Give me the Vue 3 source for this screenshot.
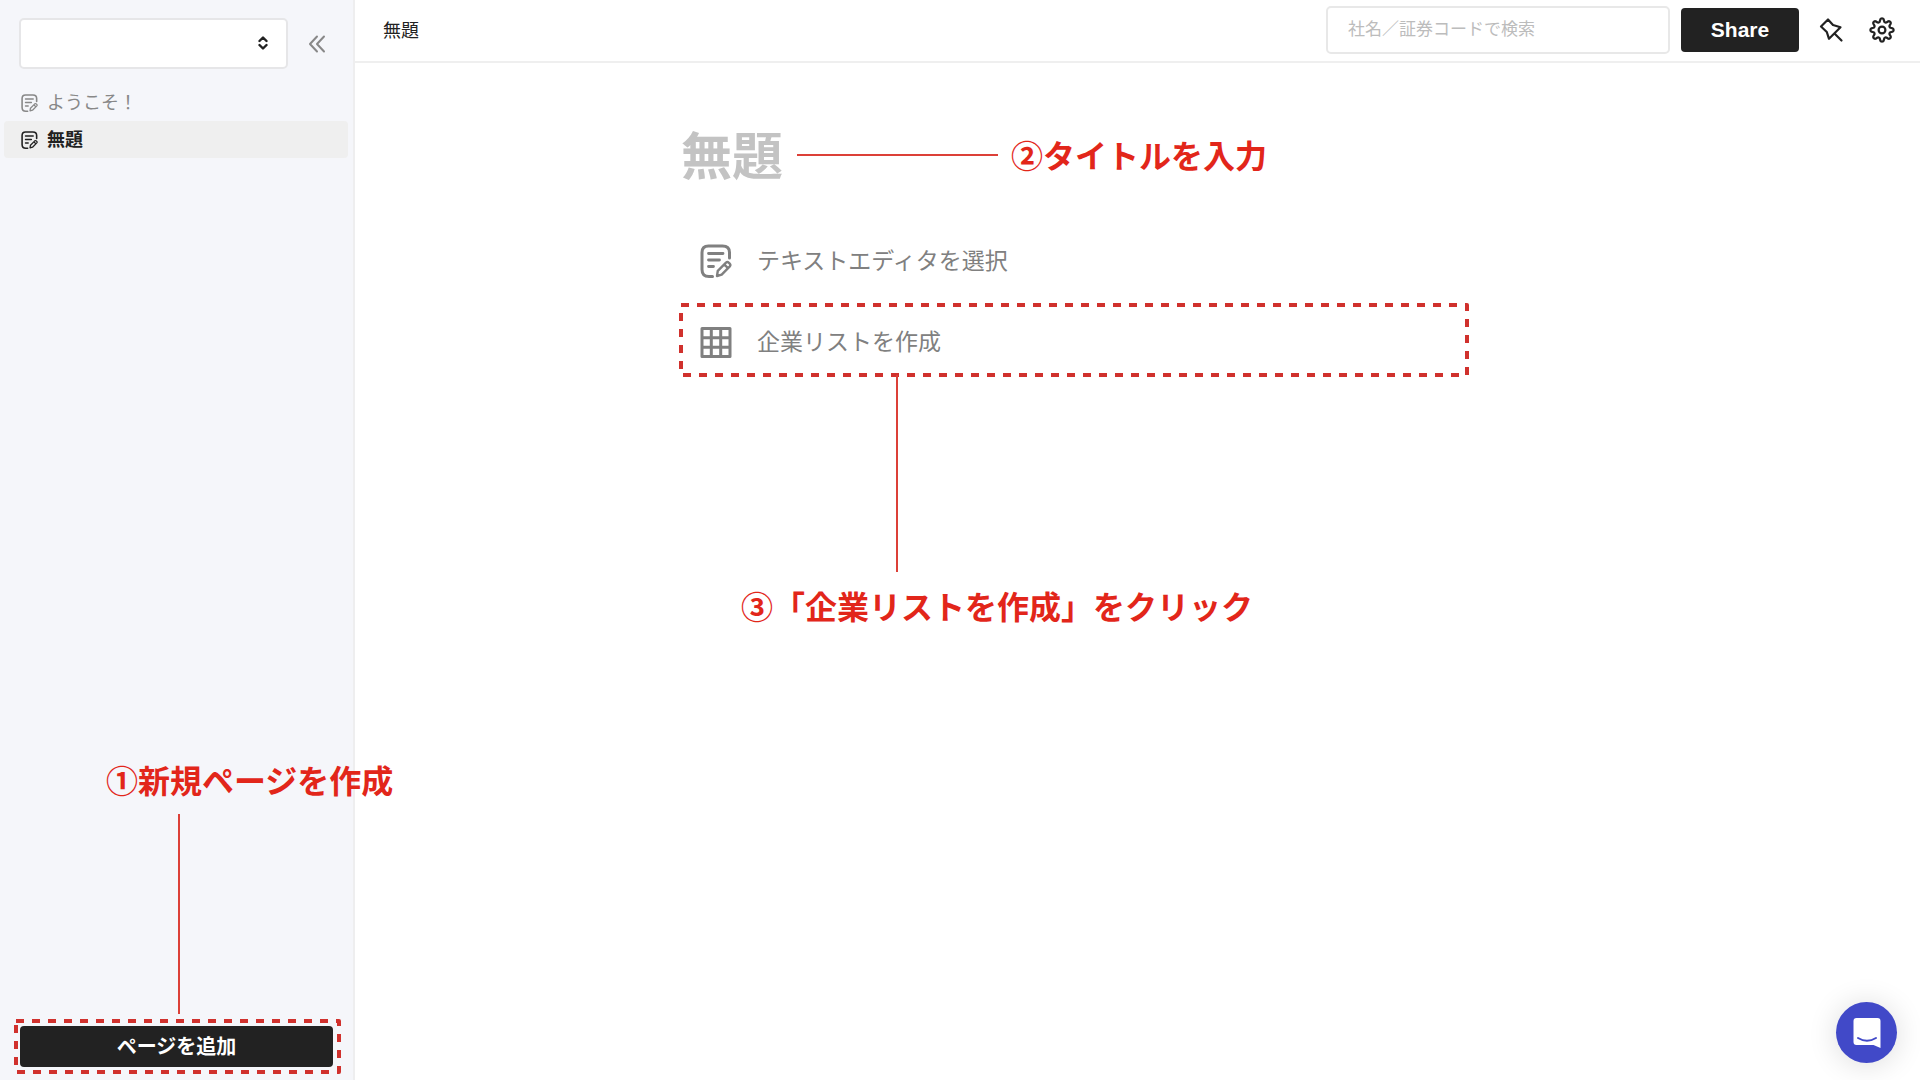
<script setup>
import { ref } from 'vue'

const pages = [
  { id: 1, title: 'ようこそ！', current: false },
  { id: 2, title: '無題', current: true },
]
const title = ref('')
const query = ref('')

const gearPoints = Array.from({ length: 120 }, (_, i) => {
  const a = (i / 120) * Math.PI * 2
  const r = 9.9 + 1.8 * Math.tanh(1.6 * Math.cos(8 * a))
  return `${(13 + r * Math.cos(a)).toFixed(2)},${(13 + r * Math.sin(a)).toFixed(2)}`
}).join(' ')
</script>

<template>
  <div class="app">
    <svg class="defs" aria-hidden="true">
      <symbol id="note" viewBox="0 0 32 34">
        <g fill="none" stroke="currentColor" stroke-linecap="round" stroke-linejoin="round">
          <path stroke-width="3" d="M29.500 14V8.500Q29.500 2 22.500 2H8.500Q2 2 2 8.500V25.500Q2 32.500 9 32.500H12.500" />
          <path stroke-width="2.800" d="M8.500 9.500H23M8.500 16H19.500M8.500 22.500H13.500" />
          <path stroke-width="2.400" d="M17 32L17.800 26.800L26 18.600Q27.400 17.400 28.900 18.800L29.700 19.600Q31 21 29.800 22.400L21.700 30.600ZM24.300 20.500L28 24.200" />
        </g>
      </symbol>
    </svg>

    <aside class="sidebar">
      <div class="switcher">
        <div class="select-wrap">
          <select aria-label="ワークスペース"><option></option></select>
          <svg class="updown" viewBox="0 0 10 14" aria-hidden="true">
            <path d="M1.500 5L5 1.500L8.500 5M1.500 9L5 12.500L8.500 9" />
          </svg>
        </div>
        <button class="collapse" aria-label="サイドバーを閉じる">
          <svg viewBox="0 0 18 18" aria-hidden="true"><path d="M9 1.500L2 9L9 16.500M16 1.500L9 9L16 16.500" /></svg>
        </button>
      </div>
      <nav class="pages">
        <a v-for="p in pages" :key="p.id" href="#" :class="['page', { current: p.current }]">
          <svg class="page-icon" aria-hidden="true"><use href="#note" /></svg>
          <span>{{ p.title }}</span>
        </a>
      </nav>
      <div class="add-area">
        <div class="callout callout-add">
          <p class="note-text">①新規ページを作成</p>
          <i class="v-line"></i>
        </div>
        <button class="add">ページを追加</button>
        <svg class="dashes" aria-hidden="true"><rect class="dash-rect" /></svg>
      </div>
    </aside>

    <div class="main">
      <header class="topbar">
        <span class="crumb">無題</span>
        <input v-model="query" class="search" type="text" aria-label="検索" placeholder="社名／証券コードで検索" />
        <button class="share">Share</button>
        <button class="icon-btn pin" aria-label="ピン留め">
          <svg viewBox="0 0 26 26" aria-hidden="true">
            <path d="M3 9.500L10 2.500L15 8L22.500 10.200L11 21.800L8.800 15ZM16.500 16.500L23.500 23.500" />
          </svg>
        </button>
        <button class="icon-btn gear" aria-label="設定">
          <svg viewBox="0 0 26 26" aria-hidden="true">
            <polygon :points="gearPoints" />
            <circle cx="13" cy="13" r="3.400" />
          </svg>
        </button>
      </header>

      <main class="editor">
        <div class="title-row">
          <input v-model="title" class="title" type="text" aria-label="タイトル" placeholder="無題" />
          <i class="h-line"></i>
          <p class="note-text">②タイトルを入力</p>
        </div>
        <button class="option">
          <svg class="option-icon" aria-hidden="true"><use href="#note" /></svg>
          <span>テキストエディタを選択</span>
        </button>
        <div class="marked">
          <button class="option">
            <svg class="option-icon" viewBox="0 0 32 34" aria-hidden="true">
              <path class="grid" d="M2 3.500H30V31.500H2ZM2 12.800H30M2 22.200H30M11.300 3.500V31.500M20.700 3.500V31.500" />
            </svg>
            <span>企業リストを作成</span>
          </button>
          <svg class="dashes" aria-hidden="true"><rect class="dash-rect" /></svg>
          <div class="callout callout-list">
            <i class="v-line"></i>
            <p class="note-text">③「企業リストを作成」をクリック</p>
          </div>
        </div>
      </main>
    </div>

    <button class="chat" aria-label="チャットを開く">
      <svg viewBox="0 0 28 32" aria-hidden="true">
        <path fill="#fff" d="M3.500 1H24.500Q27.500 1 27.500 4V31L20.500 28H3.500Q.5 28 .5 25V4Q.5 1 3.500 1Z" />
        <path class="smile" d="M5 21Q14 26.500 23 21" />
      </svg>
    </button>
  </div>
</template>

<style>
body {
  margin: 0;
}
</style>

<style scoped>
.app {
  display: flex;
  min-height: 100vh;
  background: #fff;
  color: #222;
  font-family: "Liberation Sans", "Noto Sans CJK JP", sans-serif;
  font-size: 18px;
}
.app * {
  box-sizing: border-box;
}
button,
input,
select {
  font: inherit;
  color: inherit;
  border: 0;
  padding: 0;
  margin: 0;
  background: none;
  outline: none;
}
button {
  cursor: pointer;
}
p {
  margin: 0;
}
svg {
  display: block;
  fill: none;
  stroke-linecap: round;
  stroke-linejoin: round;
}
.defs {
  position: absolute;
  width: 0;
  height: 0;
}

.sidebar {
  display: flex;
  flex-direction: column;
  flex: 0 0 355px;
  background: #f5f6fa;
  border-right: 2px solid #eeeeef;
}
.switcher {
  display: flex;
  align-items: center;
  gap: 20px;
  padding: 18px 20px 15px 19px;
}
.select-wrap {
  position: relative;
  width: 269px;
}
.select-wrap select {
  display: block;
  width: 100%;
  height: 51px;
  appearance: none;
  background: #fff;
  border: 2px solid #e6e6e8;
  border-radius: 5px;
}
.updown {
  position: absolute;
  right: 20px;
  top: 18px;
  width: 10px;
  height: 14px;
  stroke: #222;
  stroke-width: 2.4;
  pointer-events: none;
}
.collapse svg {
  width: 18px;
  height: 18px;
  stroke: #888;
  stroke-width: 2;
}
.page {
  display: flex;
  align-items: center;
  gap: 9px;
  height: 37px;
  margin: 0 5px 0 4px;
  padding-left: 17px;
  border-radius: 4px;
  color: #888;
  text-decoration: none;
}
.page span {
  padding-bottom: 4px;
}
.page.current {
  background: #efefef;
  color: #222;
  font-weight: 700;
}
.page-icon {
  width: 17px;
  height: 18px;
}
.add-area {
  position: relative;
  margin: auto 12px 6px 14px;
  padding: 7px 8px 7px 6px;
}
.add {
  display: block;
  width: 100%;
  height: 41px;
  padding-bottom: 2px;
  border-radius: 4px;
  background: #222;
  color: #fff;
  font-size: 20px;
  font-weight: 700;
}

.dashes {
  position: absolute;
  inset: 0;
  width: 100%;
  height: 100%;
  pointer-events: none;
}
.dash-rect {
  x: 2px;
  y: 2px;
  width: calc(100% - 4px);
  height: calc(100% - 4px);
  stroke: #d0312d;
  stroke-width: 4;
  stroke-dasharray: 8 8;
  stroke-linecap: butt;
}
.note-text {
  color: #e2261a;
  font-family: "Noto Sans CJK JP", sans-serif;
  font-size: 32px;
  font-weight: 700;
  line-height: 48px;
  white-space: nowrap;
}
.callout {
  position: absolute;
  z-index: 1;
  pointer-events: none;
}
.v-line {
  display: block;
  width: 2px;
  height: 200px;
  background: #dc4038;
}
.h-line {
  width: 201px;
  height: 2px;
  background: #dc4038;
}
.callout-add {
  left: 92px;
  bottom: 60px;
}
.callout-add .v-line {
  margin: 11px 0 0 72px;
}
.callout-list {
  left: 62px;
  top: 72px;
}
.callout-list .v-line {
  height: 197px;
  margin: 0 0 9px 155px;
}

.main {
  flex: 1;
  min-width: 0;
}
.topbar {
  display: flex;
  align-items: center;
  height: 63px;
  padding: 0 25px 2px 28px;
  border-bottom: 2px solid #efefef;
}
.crumb {
  padding-bottom: 2px;
}
.search {
  width: 344px;
  height: 48px;
  margin-left: auto;
  padding: 0 20px;
  border: 2px solid #e8e8e8;
  border-radius: 5px;
  font-size: 17px;
}
.search::placeholder {
  color: #bcbcbc;
  opacity: 1;
}
.share {
  width: 118px;
  height: 44px;
  margin-left: 11px;
  border-radius: 4px;
  background: #222;
  color: #fff;
  font-size: 21px;
  font-weight: 700;
}
.icon-btn svg {
  width: 26px;
  height: 26px;
  stroke: #222;
  stroke-width: 2.2;
}
.pin {
  margin-left: 19px;
}
.gear {
  margin-left: 25px;
}

.editor {
  max-width: 790px;
  margin-left: 324px;
  padding-top: 53px;
}
.title-row {
  display: flex;
  align-items: center;
  height: 78px;
  margin-bottom: 30px;
  padding-left: 2px;
}
.title {
  width: 102px;
  height: 76px;
  margin-right: 14px;
  padding-top: 4px;
  font-size: 51px;
  font-weight: 700;
}
.title::placeholder {
  color: #c3c3c3;
  opacity: 1;
}
.title-row .note-text {
  margin-left: 13px;
  padding-bottom: 2px;
}
.option {
  display: flex;
  align-items: center;
  gap: 25px;
  width: 100%;
  height: 74px;
  padding-left: 21px;
  color: #808080;
  font-size: 23px;
}
.option span {
  padding-bottom: 4px;
}
.option-icon {
  width: 32px;
  height: 34px;
}
.grid {
  stroke: currentColor;
  stroke-width: 3;
}
.marked {
  position: relative;
  margin-top: 5px;
}
.marked .option {
  padding-top: 4px;
}

.chat {
  position: fixed;
  right: 23px;
  bottom: 17px;
  display: grid;
  place-items: center;
  width: 61px;
  height: 61px;
  border-radius: 50%;
  background: #4149c8;
  box-shadow: 0 2px 30px rgba(0, 0, 0, 0.14);
}
.chat svg {
  width: 28px;
  height: 32px;
}
.smile {
  stroke: #4149c8;
  stroke-width: 2;
}
</style>
